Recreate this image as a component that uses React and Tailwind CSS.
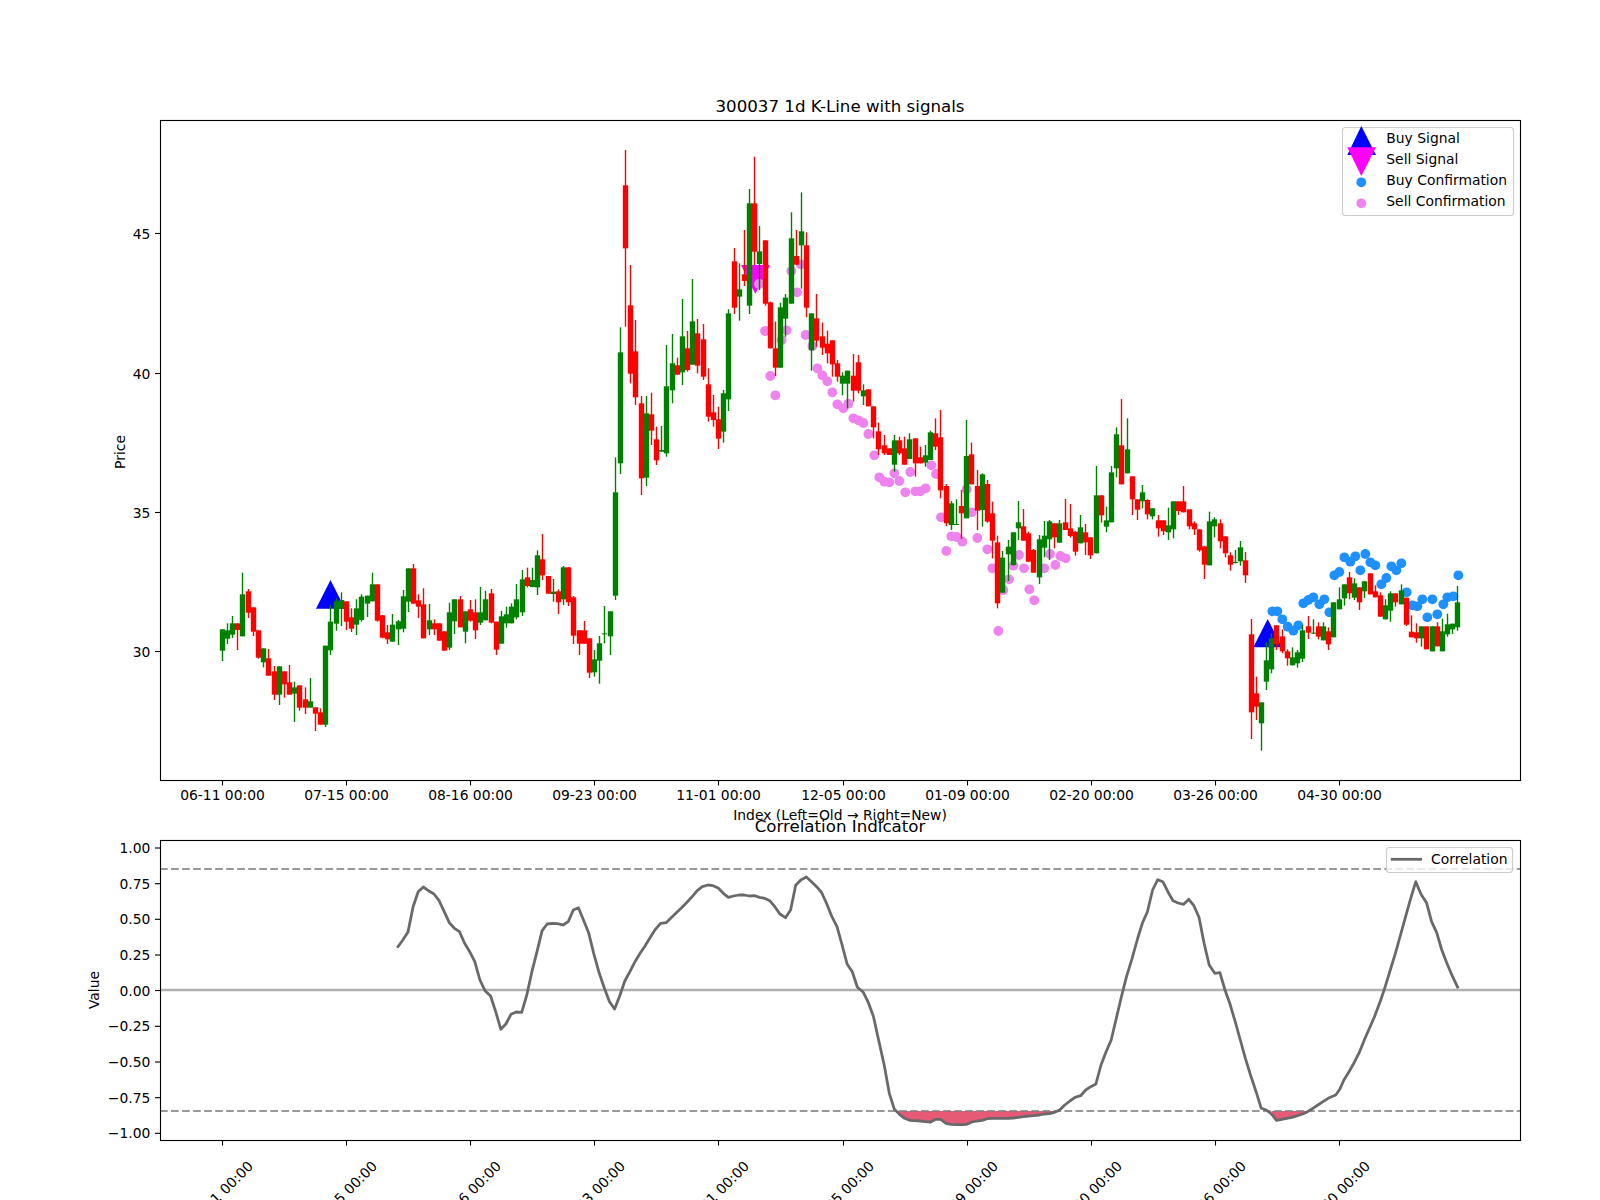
import React from "react";

const X = (i) => 222.3 + 5.17 * i;
// each row: colour, wick top, wick bottom, body top, body bottom (zoomed px read from chart)
const S1 = [
"g388,483,388,452","g370,432,391,416","g348,414,370,404","r370,450,370,390","g218,409,283,409","r267,354,274,338","r322,408,322,395","r391,476,391,473","g445,502,445,487","r447,527,475,527",
"r498,600,514,584","g499,615,499,584","r514,593,514,553","r495,584,547,584","g545,666,562,581","r556,632,556,623","r562,642,598,623","g534,623,604,623","r622,693,622,641","r625,674,637,674",
"g437,681,437,674","g316,465,365,451","g295,392,304,371","g277,378,300,326","r304,390,304,365","r325,396,352,386","g298,405,325,374","g283,365,290,360","g287,351,287,311","g218,304,253,304",
"r253,365,253,362","r345,415,346,413","r375,432,397,418","g342,425,374,425","g360,435,364,388","g270,397,289,386","g205,336,205,305","r192,311,205,311","r283,354,301,320","r265,415,313,415",
"g312,405,361,388","r358,405,370,388","r370,422,370,422","r394,452,394,452","g308,450,337,443","g298,402,298,364","r288,382,298,382","g334,430,334,395","r300,365,328,362","r298,417,337,391",
"g261,375,337,368","g272,361,298,361","r267,370,280,368","r365,465,365,449","g333,431,349,431","g320,383,343,370","g310,370,320,370","g252,358,298,352","g210,348,238,337","r203,262,232,258",
"g203,262,240,261","g151,285,166,262","r102,240,178,226","r228,281,228,281","g237,305,275,282","r268,342,274,307","g198,315,202,298","r202,318,202,307","r288,432,292,407","r391,465,391,431",
"r363,431,391,431","r415,534,415,518","g450,530,478,517","g408,551,430,482","g318,430,400,403","g334,465,334,409","g-128,300,-23,287"];
const S2 = [
"g622,1062,697,1030","r90,620,196,385","r435,790,556,761","r600,855,694,832","r828,1125,850,1075","g828,1098,880,1073","r818,975,883,932","r920,1035,958,1021","g918,995,990,995","g675,1010,799,1000",
"g642,850,730,811","r713,764,736,764","g537,795,649,757","r633,755,685,750","g477,734,604,734","r597,760,640,737","r612,780,658,770","r745,905,793,890","r825,920,877,900","r860,987,898,956",
"g810,968,820,935","g568,873,580,838","r384,582,424,563","g430,602,508,530","r330,498,463,483","g207,582,250,557","r110,435,250,395","g318,510,394,432","r361,557,361,551","r545,685,547,685",
"r605,768,685,743","g548,743,562,743","g522,650,533,596","g277,551,355,551","r330,434,408,434","g217,506,334,376","r337,592,376,563","g580,752,580,691","r522,680,595,662","r608,705,649,683",
"r632,730,671,700","r661,770,661,733","r720,785,730,770","g757,826,767,791","g752,865,752,791","r702,845,767,812","r705,820,727,812","g793,855,811,829","r808,859,808,859","r859,955,859,922",
"r908,1005,934,988","r945,1005,976,1000","r985,1005,985,1005","g945,1055,961,1034","r950,1005,961,1000","r950,1034,985,1034","g940,1017,958,1017","r955,1070,955,1030","r980,1030,1012,1030","g975,1040,1006,1028",
"g932,1020,937,1020","r895,990,940,980","r870,1135,952,1111"];
const S8 = ["r132,258,138,250","g183,270,190,255","g178,255,252,255","r150,297,198,220"];
const S3 = [
"g60,355,168,355","r128,253,163,253","r210,390,258,332","g220,380,223,330","r240,368,252,365","r305,475,340,422","r407,625,427,610","g453,578,473,578","g420,543,440,463","g397,497,397,495",
"g303,420,367,385","r327,422,379,422","r395,485,400,485","r447,518,450,518","g405,552,418,532","g363,472,407,443","g360,480,364,418","r370,445,370,412","g360,428,370,428","r297,390,367,390",
"r312,413,385,408","r393,467,395,455","g345,430,382,430","r372,465,397,427","r412,477,412,466","g198,460,286,460","r286,368,286,346","g320,397,361,380","g198,367,217,367","g82,232,103,205",
"r-3,253,136,253","g55,220,148,220","r229,345,229,298","r298,360,298,329","g255,325,277,304","r298,358,300,343","g325,358,325,349","r345,410,361,385","r361,405,361,394","g323,420,376,397",
"g304,415,304,388","r304,345,304,333","r258,337,304,337","r328,388,328,379","r364,405,370,388","r388,455,388,451","r439,537,439,494","g335,496,364,496","g352,412,358,379","r358,445,370,424",
"r409,472,409,460","r457,512,466,494","g450,490,486,489","g423,497,442,484","r456,549,481,526"];
const S4 = [
"r327,687,373,607","r500,630,550,590","g577,722,577,640","g397,540,451,515","g370,490,385,478","r346,420,346,403","r358,430,379,424","r418,467,424,445","g412,466,442,466","g420,473,427,460",
"g345,456,361,446","r318,387,349,368","g328,372,368,370","r337,388,349,380","g337,391,349,391","r352,420,364,403","g277,382,277,382","g232,298,268,298","g223,287,223,265","r186,268,202,250",
"g205,270,220,263","r232,300,232,277","g214,264,214,244","r190,253,190,253","r226,262,244,262","r247,320,256,320","g268,328,286,328","g244,335,250,302","r250,290,250,277","g223,283,241,283",
"r263,348,263,344","r316,382,365,382","r340,398,367,385","g349,410,349,385","r349,418,349,418","g349,424,349,424","r337,409,349,409","g326,424,364,424","g311,380,343,373","g341,372,341,358","g228,362,277,352"];

const sec = (rows, off) =>
  rows.map((s) => {
    const [a, b, c, d] = s.slice(1).split(",").map(Number);
    return { g: s[0] === "g", wt: off + a / 3, wb: off + b / 3, bt: off + c / 3, bb: off + d / 3 };
  });
const candles = [...sec(S1, 500), ...sec(S2, 120), ...sec(S8, 440), ...sec(S3, 400), ...sec(S4, 510)];

const pink = [
[477,492],[495,633],[545,660],[560,631],[511,768],[526,826],[574,453],[602,433],[591,517],[617,645],[637,678],[652,745],[667,766],[682,784],[697,817],[712,853],[730,865],[745,851],[760,895],[775,901],[790,909],[805,942],[823,1006],[838,1072],[853,1085],[868,1087],[883,1060],[898,1083],[916,1117],[931,1056],[946,1114],[961,1114],[977,1105],[994,1036],[1008,1062],[1023,1192],[1100,1108],[1115,1177],
].map(([x, y]) => [600 + x / 3, 120 + y / 3]).concat(
  [[169,333],[184,289],[200,291],[217,305]].map(([x, y]) => [890 + x / 3, 440 + y / 3]),
  [[82,414],[112,448],[127,505],[145,693],[160,570],[177,538],[190,497],[207,465],[222,505],[238,568],[253,601],[283,505],[300,462],[316,495],[331,468],[347,475]].map(([x, y]) => [950 + x / 3, 400 + y / 3])
);
const blue = [[97,304],[112,304],[127,328],[143,350],[160,362],[175,346],[190,280],[205,270],[220,262],[238,283],[253,268],[268,307],[283,196],[298,186],[313,142],[331,155],[346,139],[361,181],[376,132],[391,157],[406,166],[424,223],[439,204],[454,169],[469,181],[484,160],[500,247],[517,286],[532,289],[547,268],[562,322],[577,268],[592,313],[610,283],[622,262],[640,259],[655,196]].map(([x, y]) => [1240 + x / 3, 510 + y / 3]);

const L1 = [661,503,671,482,682,456,692,380,702,335,712,321,722,332,733,342,743,362,753,395,763,428,773,445,783,455,793,490,803,515,813,545,823,600,833,632,844,648,854,695,864,748,874,732,884,703,894,696,905,697,915,645,925,575,935,515,945,452,955,432,965,430,975,431,986,435,996,425,1006,390,1016,383,1026,420,1036,458,1046,520,1056,575,1067,625,1077,665,1087,687,1097,648,1107,603,1117,575,1127,545,1137,520,1147,497,1157,472,1167,448,1177,430,1188,428,1198,413,1208,398,1218,384,1228,368,1238,352,1249,332,1259,320,1270,315,1280,317,1290,324,1300,340,1310,352,1320,348,1331,345,1341,345,1351,348,1361,347,1371,352,1381,355,1391,362,1401,380,1411,402,1422,413,1432,390,1442,316,1452,300,1463,291,1473,305,1483,320,1493,338,1503,372,1513,410,1523,440,1533,495,1543,553,1553,575,1563,622];
const L2 = [124,637,134,668,144,710,154,780,165,855,175,940,185,988,195,1003,205,1015,215,1021,226,1022,236,1023,246,1025,256,1026,266,1018,276,1018,286,1030,296,1033,307,1034,317,1034,327,1033,337,1026,347,1023,357,1021,367,1016,377,1015,388,1015,398,1015,408,1015,418,1014,428,1012,438,1010,448,1008,458,1007,469,1005,479,1002,489,1001,499,997,509,990,519,975,529,963,539,952,550,947,560,930,570,920,580,912,590,855,600,815,610,780,620,715,630,650,640,590,651,535,661,480,671,430,681,395,691,330,701,299,711,305,721,335,731,362,741,369,752,373,762,358,772,377,782,412,792,490,802,555,813,580,823,578,833,630,843,673,853,725,863,780,873,835,883,885,894,935,904,985,914,990,924,1002,934,1021,944,1018,954,1015,964,1012,975,1007,985,1002,995,995,1005,985,1015,975,1025,965,1035,955,1050,945,1058,928,1066,900,1076,875,1086,848,1096,818,1106,780,1116,745,1126,710,1137,665,1147,620,1157,570,1167,520,1177,465,1187,410,1197,355,1207,305,1217,342,1228,368,1238,425,1248,458,1258,510,1268,550,1279,590,1290,625];
const pts = (a, ox) => {
  const o = [];
  for (let i = 0; i < a.length; i += 2) o.push([ox + a[i] / 1.96, 780 + a[i + 1] / 3]);
  return o;
};
const line = [...pts(L1, 60), ...pts(L2, 800)];
const str = (a) => a.map((p) => p.map((n) => n.toFixed(1)).join(",")).join(" ");
const fill1 = [[896.4, 1111], ...pts(L2.slice(14, 76), 800), [1059, 1111]];
const fill2 = [[1271.4, 1111], ...pts(L2, 800).filter((p) => p[0] > 1271 && p[0] < 1308), [1309, 1111]];

const ticks = ["06-11 00:00","07-15 00:00","08-16 00:00","09-23 00:00","11-01 00:00","12-05 00:00","01-09 00:00","02-20 00:00","03-26 00:00","04-30 00:00"];
const tickX = [222.5, 346.5, 470.5, 594.5, 718.5, 843.5, 967.5, 1091.5, 1215.5, 1339.5];
const upY = [[45, 233.5],[40, 373.5],[35, 512.5],[30, 651.5]];
const lowY = [["1.00",848],["0.75",883.7],["0.50",919.3],["0.25",955],["0.00",990.5],["−0.25",1026.3],["−0.50",1062],["−0.75",1097.7],["−1.00",1133.3]];

const Axes = ({ y0, y1 }) => (
  <rect x="160.5" y={y0 + 0.5} width="1360" height={y1 - y0} fill="none" stroke="#000" strokeWidth="1.11" />
);

export default function App() {
  return (
    <div className="w-[1600px] h-[1200px] bg-white overflow-hidden">
      <svg width="1600" height="1200" viewBox="0 0 1600 1200" className="block font-['DejaVu_Sans',sans-serif] text-[13.89px] fill-black">
        {/* buy / sell markers, confirmations */}
        <polygon points="330.5,580 316,608.7 345,608.7" fill="#0000ff" />
        <polygon points="1267.7,619 1253.3,647.3 1282,647.3" fill="#0000ff" />
        <polygon points="741,265 770,265 755.3,294" fill="#ff00ff" />
        {pink.map(([x, y], i) => <circle key={i} cx={x} cy={y} r="4.9" fill="#ee82ee" />)}
        {blue.map(([x, y], i) => <circle key={i} cx={x} cy={y} r="4.9" fill="#1e90ff" />)}
        {candles.map((c, i) => {
          const col = c.g ? "#008000" : "#ff0000";
          const cx = Math.floor(X(i)) + 0.5;
          return (
            <g key={i} fill={col} stroke="none">
              <rect x={cx - 0.7} y={c.wt} width="1.4" height={c.wb - c.wt} />
              <rect x={cx - 2.7} y={c.bt} width="5.4" height={Math.max(c.bb - c.bt, 1)} />
            </g>
          );
        })}
        <Axes y0={120} y1={780} />
        <text x="840" y="111.7" textAnchor="middle" className="text-[16.67px]">300037 1d K-Line with signals</text>
        {upY.map(([l, y]) => (
          <g key={l}>
            <line x1="155" x2="160" y1={y} y2={y} stroke="#000" strokeWidth="1.11" />
            <text x="150.3" y={y + 5} textAnchor="end">{l}</text>
          </g>
        ))}
        {ticks.map((t, i) => (
          <g key={t}>
            <line x1={tickX[i]} x2={tickX[i]} y1="780.5" y2="785.5" stroke="#000" strokeWidth="1.11" />
            <text x={tickX[i]} y="800.4" textAnchor="middle">{t}</text>
          </g>
        ))}
        <text x="840" y="819.5" textAnchor="middle">Index (Left=Old → Right=New)</text>
        <text transform="translate(125 452) rotate(-90)" textAnchor="middle">Price</text>

        {/* legend */}
        <rect x="1342.5" y="127.5" width="171" height="88" rx="3" fill="#fff" fillOpacity="0.8" stroke="#ccc" strokeWidth="1.11" />
        <polygon points="1361.3,126 1347.3,155 1376,155" fill="#0000ff" />
        <polygon points="1347.3,147.3 1376,147.3 1361.3,176" fill="#ff00ff" />
        <circle cx="1361.3" cy="182.3" r="4.9" fill="#1e90ff" />
        <circle cx="1361.3" cy="203.3" r="4.9" fill="#ee82ee" />
        <text x="1386.3" y="143">Buy Signal</text>
        <text x="1386.3" y="164">Sell Signal</text>
        <text x="1386.3" y="185">Buy Confirmation</text>
        <text x="1386.3" y="206">Sell Confirmation</text>

        {/* correlation panel */}
        <polygon points={str(fill1)} fill="#dc143c" fillOpacity="0.7" />
        <polygon points={str(fill2)} fill="#dc143c" fillOpacity="0.7" />
        <line x1="160" x2="1520" y1="990" y2="990" stroke="#b0b0b0" strokeWidth="2.7" />
        <line x1="160" x2="1520" y1="869" y2="869" stroke="#808080" strokeOpacity="0.8" strokeWidth="2.08" strokeDasharray="7.7 3.33" />
        <line x1="160" x2="1520" y1="1111" y2="1111" stroke="#808080" strokeOpacity="0.8" strokeWidth="2.08" strokeDasharray="7.7 3.33" />
        <polyline points={str(line)} fill="none" stroke="#696969" strokeWidth="2.78" strokeLinejoin="round" />
        <Axes y0={840} y1={1140} />
        <text x="840" y="831.7" textAnchor="middle" className="text-[16.67px]">Correlation Indicator</text>
        {lowY.map(([l, y]) => (
          <g key={l}>
            <line x1="155" x2="160" y1={y} y2={y} stroke="#000" strokeWidth="1.11" />
            <text x="150.3" y={y + 5} textAnchor="end">{l}</text>
          </g>
        ))}
        {ticks.map((t, i) => (
          <g key={t}>
            <line x1={tickX[i]} x2={tickX[i]} y1="1140.5" y2="1145.5" stroke="#000" strokeWidth="1.11" />
            <text transform={`translate(${tickX[i] - 2} 1193.5) rotate(-45)`} y="5" textAnchor="middle">{t}</text>
          </g>
        ))}
        <text transform="translate(98.5 990) rotate(-90)" textAnchor="middle">Value</text>
        <rect x="1386.5" y="847.5" width="126" height="25" rx="3" fill="#fff" fillOpacity="0.8" stroke="#ccc" strokeWidth="1.11" />
        <line x1="1390.8" x2="1422" y1="859.3" y2="859.3" stroke="#696969" strokeWidth="2.78" />
        <text x="1431" y="864">Correlation</text>
      </svg>
    </div>
  );
}
